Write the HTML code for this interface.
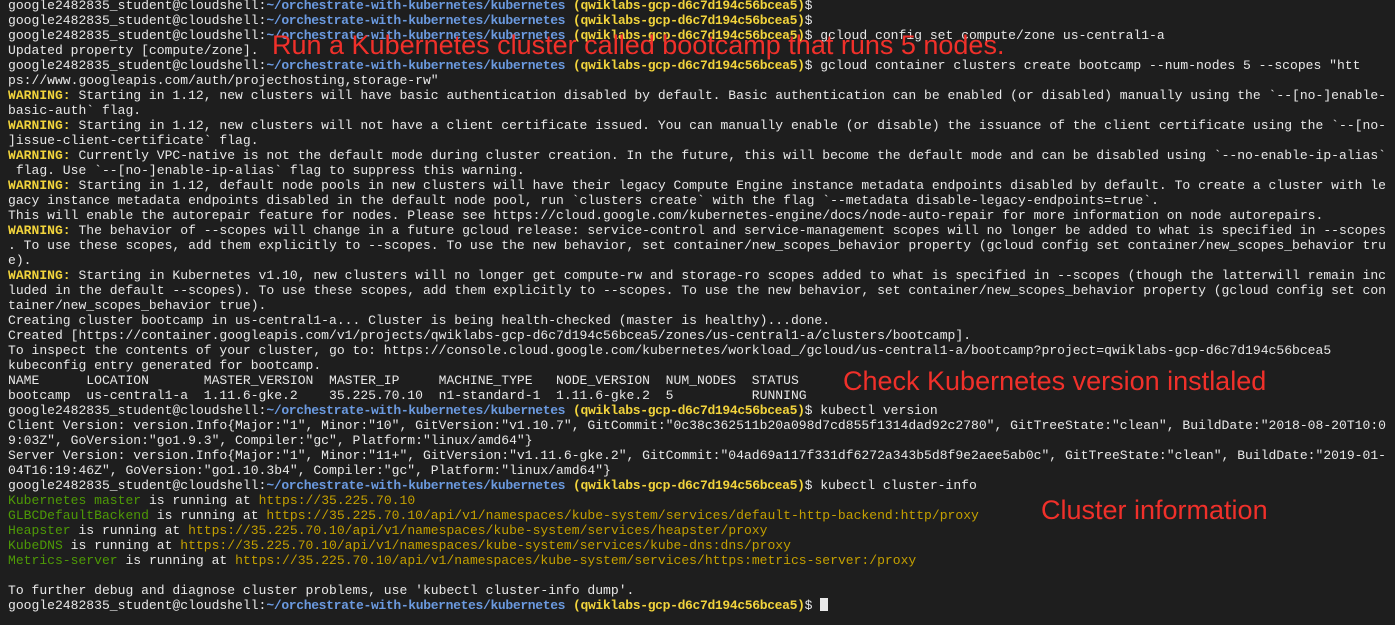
<!DOCTYPE html>
<html><head><meta charset="utf-8"><style>
html,body{margin:0;padding:0;background:#1e1e1e;width:1395px;height:625px;overflow:hidden}
pre{margin:0;padding:0 0 0 8px;position:absolute;top:-2px;left:0;font-family:"Liberation Mono",monospace;font-size:13.05px;line-height:15px;color:#e8e8e8;white-space:pre}
.p{color:#6b9ae0;font-weight:bold;letter-spacing:-0.36px}
.y{color:#f2d43c;font-weight:bold;letter-spacing:-0.36px}
.w{color:#f2d43c;font-weight:bold}
.g{color:#4e9a06}
.u{color:#c4a000}
.a{position:absolute;font-family:"Liberation Sans",sans-serif;font-size:27px;color:#f0302a;line-height:1;white-space:nowrap}
.cur{display:inline-block;width:8px;height:13px;background:#e8e8e8;vertical-align:-2px}
</style></head><body>
<pre>google2482835_student@cloudshell:<span class="p">~/orchestrate-with-kubernetes/kubernetes</span> <span class="y">(qwiklabs-gcp-d6c7d194c56bcea5)</span>$
google2482835_student@cloudshell:<span class="p">~/orchestrate-with-kubernetes/kubernetes</span> <span class="y">(qwiklabs-gcp-d6c7d194c56bcea5)</span>$
google2482835_student@cloudshell:<span class="p">~/orchestrate-with-kubernetes/kubernetes</span> <span class="y">(qwiklabs-gcp-d6c7d194c56bcea5)</span>$ gcloud config set compute/zone us-central1-a
Updated property [compute/zone].
google2482835_student@cloudshell:<span class="p">~/orchestrate-with-kubernetes/kubernetes</span> <span class="y">(qwiklabs-gcp-d6c7d194c56bcea5)</span>$ gcloud container clusters create bootcamp --num-nodes 5 --scopes "htt
ps://www.googleapis.com/auth/projecthosting,storage-rw"
<span class="w">WARNING:</span> Starting in 1.12, new clusters will have basic authentication disabled by default. Basic authentication can be enabled (or disabled) manually using the `--[no-]enable-
basic-auth` flag.
<span class="w">WARNING:</span> Starting in 1.12, new clusters will not have a client certificate issued. You can manually enable (or disable) the issuance of the client certificate using the `--[no-
]issue-client-certificate` flag.
<span class="w">WARNING:</span> Currently VPC-native is not the default mode during cluster creation. In the future, this will become the default mode and can be disabled using `--no-enable-ip-alias`
 flag. Use `--[no-]enable-ip-alias` flag to suppress this warning.
<span class="w">WARNING:</span> Starting in 1.12, default node pools in new clusters will have their legacy Compute Engine instance metadata endpoints disabled by default. To create a cluster with le
gacy instance metadata endpoints disabled in the default node pool, run `clusters create` with the flag `--metadata disable-legacy-endpoints=true`.
This will enable the autorepair feature for nodes. Please see https://cloud.google.com/kubernetes-engine/docs/node-auto-repair for more information on node autorepairs.
<span class="w">WARNING:</span> The behavior of --scopes will change in a future gcloud release: service-control and service-management scopes will no longer be added to what is specified in --scopes
. To use these scopes, add them explicitly to --scopes. To use the new behavior, set container/new_scopes_behavior property (gcloud config set container/new_scopes_behavior tru
e).
<span class="w">WARNING:</span> Starting in Kubernetes v1.10, new clusters will no longer get compute-rw and storage-ro scopes added to what is specified in --scopes (though the latterwill remain inc
luded in the default --scopes). To use these scopes, add them explicitly to --scopes. To use the new behavior, set container/new_scopes_behavior property (gcloud config set con
tainer/new_scopes_behavior true).
Creating cluster bootcamp in us-central1-a... Cluster is being health-checked (master is healthy)...done.
Created [https://container.googleapis.com/v1/projects/qwiklabs-gcp-d6c7d194c56bcea5/zones/us-central1-a/clusters/bootcamp].
To inspect the contents of your cluster, go to: https://console.cloud.google.com/kubernetes/workload_/gcloud/us-central1-a/bootcamp?project=qwiklabs-gcp-d6c7d194c56bcea5
kubeconfig entry generated for bootcamp.
NAME      LOCATION       MASTER_VERSION  MASTER_IP     MACHINE_TYPE   NODE_VERSION  NUM_NODES  STATUS
bootcamp  us-central1-a  1.11.6-gke.2    35.225.70.10  n1-standard-1  1.11.6-gke.2  5          RUNNING
google2482835_student@cloudshell:<span class="p">~/orchestrate-with-kubernetes/kubernetes</span> <span class="y">(qwiklabs-gcp-d6c7d194c56bcea5)</span>$ kubectl version
Client Version: version.Info{Major:"1", Minor:"10", GitVersion:"v1.10.7", GitCommit:"0c38c362511b20a098d7cd855f1314dad92c2780", GitTreeState:"clean", BuildDate:"2018-08-20T10:0
9:03Z", GoVersion:"go1.9.3", Compiler:"gc", Platform:"linux/amd64"}
Server Version: version.Info{Major:"1", Minor:"11+", GitVersion:"v1.11.6-gke.2", GitCommit:"04ad69a117f331df6272a343b5d8f9e2aee5ab0c", GitTreeState:"clean", BuildDate:"2019-01-
04T16:19:46Z", GoVersion:"go1.10.3b4", Compiler:"gc", Platform:"linux/amd64"}
google2482835_student@cloudshell:<span class="p">~/orchestrate-with-kubernetes/kubernetes</span> <span class="y">(qwiklabs-gcp-d6c7d194c56bcea5)</span>$ kubectl cluster-info
<span class="g">Kubernetes master</span> is running at <span class="u">https://35.225.70.10</span>
<span class="g">GLBCDefaultBackend</span> is running at <span class="u">https://35.225.70.10/api/v1/namespaces/kube-system/services/default-http-backend:http/proxy</span>
<span class="g">Heapster</span> is running at <span class="u">https://35.225.70.10/api/v1/namespaces/kube-system/services/heapster/proxy</span>
<span class="g">KubeDNS</span> is running at <span class="u">https://35.225.70.10/api/v1/namespaces/kube-system/services/kube-dns:dns/proxy</span>
<span class="g">Metrics-server</span> is running at <span class="u">https://35.225.70.10/api/v1/namespaces/kube-system/services/https:metrics-server:/proxy</span>

To further debug and diagnose cluster problems, use 'kubectl cluster-info dump'.
google2482835_student@cloudshell:<span class="p">~/orchestrate-with-kubernetes/kubernetes</span> <span class="y">(qwiklabs-gcp-d6c7d194c56bcea5)</span>$ <span class="cur"></span></pre>
<div class="a" style="left:272px;top:32px">Run a Kubernetes cluster called bootcamp that runs 5 nodes.</div>
<div class="a" style="left:843px;top:368px">Check Kubernetes version instlaled</div>
<div class="a" style="left:1041px;top:497px">Cluster information</div>
</body></html>
